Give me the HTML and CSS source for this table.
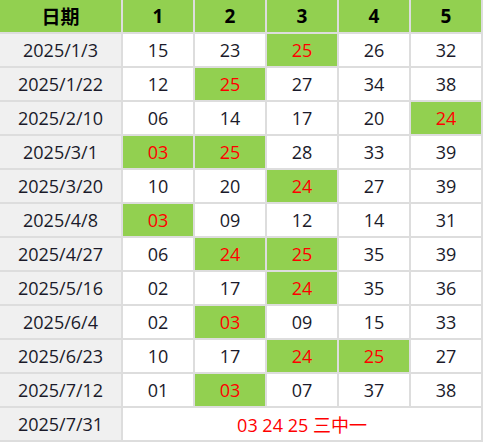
FILE: index.html
```html
<!DOCTYPE html>
<html>
<head>
<meta charset="utf-8">
<link rel="stylesheet" href="styles.css">
</head>
<body>
<div class="grid">
  <div class="h">日期</div><div class="h">1</div><div class="h">2</div><div class="h">3</div><div class="h">4</div><div class="h">5</div>

  <div class="d">2025/1/3</div><div class="n">15</div><div class="n">23</div><div class="n hit">25</div><div class="n">26</div><div class="n">32</div>
  <div class="d">2025/1/22</div><div class="n">12</div><div class="n hit">25</div><div class="n">27</div><div class="n">34</div><div class="n">38</div>
  <div class="d">2025/2/10</div><div class="n">06</div><div class="n">14</div><div class="n">17</div><div class="n">20</div><div class="n hit">24</div>
  <div class="d">2025/3/1</div><div class="n hit">03</div><div class="n hit">25</div><div class="n">28</div><div class="n">33</div><div class="n">39</div>
  <div class="d">2025/3/20</div><div class="n">10</div><div class="n">20</div><div class="n hit">24</div><div class="n">27</div><div class="n">39</div>
  <div class="d">2025/4/8</div><div class="n hit">03</div><div class="n">09</div><div class="n">12</div><div class="n">14</div><div class="n">31</div>
  <div class="d">2025/4/27</div><div class="n">06</div><div class="n hit">24</div><div class="n hit">25</div><div class="n">35</div><div class="n">39</div>
  <div class="d">2025/5/16</div><div class="n">02</div><div class="n">17</div><div class="n hit">24</div><div class="n">35</div><div class="n">36</div>
  <div class="d">2025/6/4</div><div class="n">02</div><div class="n hit">03</div><div class="n">09</div><div class="n">15</div><div class="n">33</div>
  <div class="d">2025/6/23</div><div class="n">10</div><div class="n">17</div><div class="n hit">24</div><div class="n hit">25</div><div class="n">27</div>
  <div class="d">2025/7/12</div><div class="n">01</div><div class="n hit">03</div><div class="n">07</div><div class="n">37</div><div class="n">38</div>
  <div class="d">2025/7/31</div><div class="n wide">03 24 25 三中一</div>
</div>
</body>
</html>
```

FILE: styles.css
```css
html, body {
  margin: 0;
  padding: 0;
  background: #ffffff;
}

.grid {
  display: grid;
  grid-template-columns: 121px repeat(5, 70px);
  grid-auto-rows: 32px;
  gap: 2px;
  padding: 0 2px 2px 0;
  background: #dddddd;
  width: 481px;
  font-family: "Open Sans", "Noto Sans", "Noto Sans CJK SC", sans-serif;
  font-size: 18px;
  color: #1a1a2a;
}

.grid > div {
  display: flex;
  align-items: center;
  justify-content: center;
}

.h {
  background: #92d050;
  font-weight: bold;
  font-size: 19px;
  color: #000000;
}

.d {
  background: #f0f0f0;
}

.n {
  background: #ffffff;
}

.hit {
  background: #92d050;
  color: #ff0000;
}

.wide {
  grid-column: span 5;
  color: #ff0000;
}
```
